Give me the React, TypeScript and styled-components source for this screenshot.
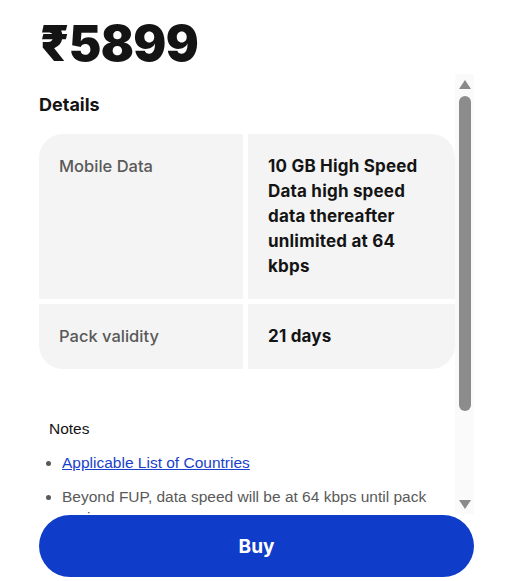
import React from "react";
import styled, { createGlobalStyle } from "styled-components";

const GlobalStyle = createGlobalStyle`
  html, body { margin: 0; padding: 0; background: #ffffff; }
  body { font-family: Inter, "Noto Sans", sans-serif; color: #141414; }
  * { box-sizing: border-box; }
`;

const Page = styled.div`
  width: 509px;
  padding: 19px 35px 0 39px;
  display: flex;
  flex-direction: column;
`;

const Price = styled.div`
  font-family: Inter, sans-serif;
  font-weight: 900;
  font-size: 49px;
  line-height: 49px;
  letter-spacing: -0.6px;
  color: #141414;
  margin-left: 1px;
`;

const ScrollArea = styled.div`
  margin-top: 6px;
  height: 440px;
  display: flex;
`;

const Viewport = styled.div`
  flex: 1;
  min-width: 0;
  overflow: hidden;
`;

const Content = styled.div`
  padding: 19px 0 124px 0;
`;

const Heading = styled.h2`
  margin: 0 0 17px 0;
  font-size: 18px;
  line-height: 24px;
  font-weight: 700;
  color: #141414;
`;

const Table = styled.div`
  display: grid;
  grid-template-columns: 204px 1fr;
  gap: 5px;
  border-radius: 24px;
  overflow: hidden;
`;

const Cell = styled.div<{ $strong?: boolean }>`
  background: #f4f4f4;
  padding: 20px;
  font-size: ${(p) => (p.$strong ? "17px" : "16.5px")};
  line-height: 25px;
  font-weight: ${(p) => (p.$strong ? 700 : 500)};
  letter-spacing: ${(p) => (p.$strong ? "0.2px" : "0")};
  color: ${(p) => (p.$strong ? "#141414" : "#595959")};
`;

const Notes = styled.div`
  margin-top: 51px;
  font-family: "Liberation Sans", Arial, sans-serif;
  font-size: 15.5px;
  line-height: 18px;
`;

const NotesTitle = styled.p`
  margin: 0 0 14px 10px;
  color: #141414;
`;

const List = styled.ul`
  margin: 0;
  padding: 0 0 0 23px;
  color: #595959;
`;

const Item = styled.li`
  line-height: 21px;
  margin-bottom: 13px;
  &::marker { color: #595959; }
`;

const Link = styled.a`
  color: #1a3fc9;
  text-decoration: underline;
`;

const Track = styled.div`
  width: 19px;
  background: #fafafa;
  display: flex;
  flex-direction: column;
  align-items: center;
  padding: 6px 0 5px 0;
`;

const Arrow = styled.div<{ $down?: boolean }>`
  width: 0;
  height: 0;
  border-left: 6px solid transparent;
  border-right: 6px solid transparent;
  ${(p) =>
    p.$down
      ? "border-top: 9px solid #8a8a8a; margin-top: auto;"
      : "border-bottom: 9px solid #8a8a8a;"}
`;

const Thumb = styled.div`
  margin-top: 7px;
  width: 12px;
  height: 315px;
  border-radius: 6px;
  background: #8c8c8c;
`;

const BuyButton = styled.button`
  margin-top: 1px;
  width: 435px;
  height: 62px;
  border: none;
  border-radius: 31px;
  background: #0f3cc9;
  color: #ffffff;
  font-family: Inter, sans-serif;
  font-weight: 700;
  font-size: 19px;
  cursor: pointer;
`;

export default function App() {
  return (
    <>
      <GlobalStyle />
      <Page>
        <Price>₹5899</Price>
        <ScrollArea>
          <Viewport>
            <Content>
              <Heading>Details</Heading>
              <Table>
                <Cell>Mobile Data</Cell>
                <Cell $strong>
                  10 GB High Speed Data high speed data thereafter unlimited at 64 kbps
                </Cell>
                <Cell>Pack validity</Cell>
                <Cell $strong>21 days</Cell>
              </Table>
              <Notes>
                <NotesTitle>Notes</NotesTitle>
                <List>
                  <Item>
                    <Link href="#">Applicable List of Countries</Link>
                  </Item>
                  <Item>Beyond FUP, data speed will be at 64 kbps until pack expires.</Item>
                </List>
              </Notes>
            </Content>
          </Viewport>
          <Track>
            <Arrow />
            <Thumb />
            <Arrow $down />
          </Track>
        </ScrollArea>
        <BuyButton>Buy</BuyButton>
      </Page>
    </>
  );
}
